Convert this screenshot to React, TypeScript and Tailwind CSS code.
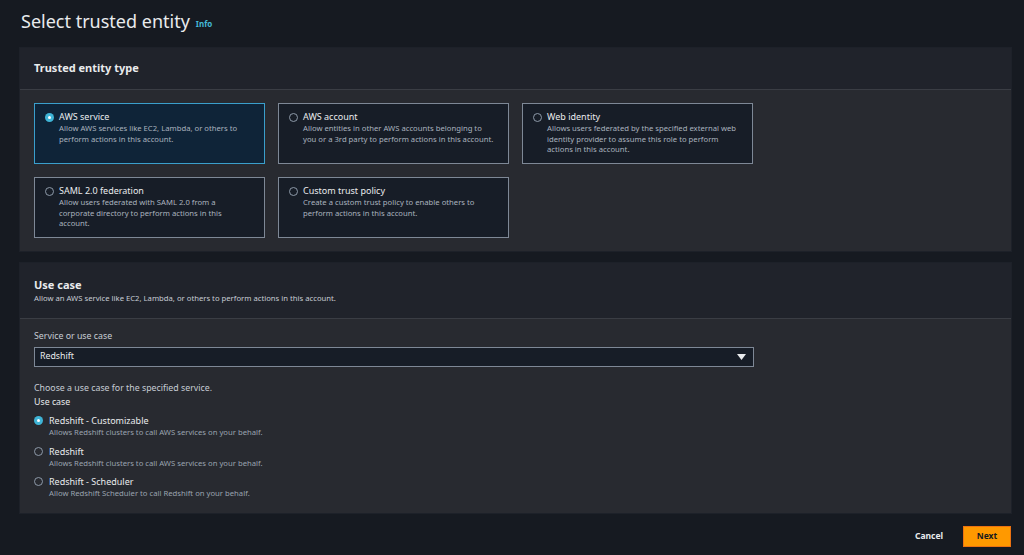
import { useState } from 'react'

type Tile = { id: string; title: string; desc: string }

const tiles: Tile[] = [
  { id: 'aws', title: 'AWS service', desc: 'Allow AWS services like EC2, Lambda, or others to perform actions in this account.' },
  { id: 'account', title: 'AWS account', desc: 'Allow entities in other AWS accounts belonging to you or a 3rd party to perform actions in this account.' },
  { id: 'web', title: 'Web identity', desc: 'Allows users federated by the specified external web identity provider to assume this role to perform actions in this account.' },
  { id: 'saml', title: 'SAML 2.0 federation', desc: 'Allow users federated with SAML 2.0 from a corporate directory to perform actions in this account.' },
  { id: 'custom', title: 'Custom trust policy', desc: 'Create a custom trust policy to enable others to perform actions in this account.' },
]

const useCases = [
  { id: 'custom', title: 'Redshift - Customizable', desc: 'Allows Redshift clusters to call AWS services on your behalf.' },
  { id: 'plain', title: 'Redshift', desc: 'Allows Redshift clusters to call AWS services on your behalf.' },
  { id: 'sched', title: 'Redshift - Scheduler', desc: 'Allow Redshift Scheduler to call Redshift on your behalf.' },
]

function Radio({ on }: { on: boolean }) {
  return on ? (
    <span className="mt-[2px] flex h-[9px] w-[9px] shrink-0 items-center justify-center rounded-full bg-[#3fb4d6]">
      <span className="h-[3px] w-[3px] rounded-full bg-white" />
    </span>
  ) : (
    <span className="mt-[2px] h-[9px] w-[9px] shrink-0 rounded-full border border-[#8d99a8]" />
  )
}

export default function App() {
  const [entity, setEntity] = useState('aws')
  const [useCase, setUseCase] = useState('custom')

  return (
    <div className="min-h-[555px] bg-[#161a21] pl-[20px] pr-[13px] text-[#d1d5db]" style={{ fontFamily: '"Noto Sans", "Open Sans", sans-serif' }}>
      <div className="flex items-end gap-[6px] pt-[8px] pl-[1px]">
        <h1 className="text-[18px] leading-[26px] text-[#e9ebed]">Select trusted entity</h1>
        <span className="mb-[4px] text-[8px] font-bold text-[#44b9d6]">Info</span>
      </div>

      <section className="mt-[14px] bg-[#282a30] shadow-[0_0_0_1px_#1d2129]">
        <div className="flex h-[42px] items-center border-b border-[#3a3d44] bg-[#20232b] px-[14px]">
          <h2 className="text-[11px] font-bold text-[#e9ebed]">Trusted entity type</h2>
        </div>
        <div className="grid grid-cols-[231px_231px_231px] gap-x-[13px] gap-y-[13px] px-[14px] pt-[13px] pb-[13px]">
          {tiles.map((t) => {
            const on = entity === t.id
            return (
              <button
                key={t.id}
                onClick={() => setEntity(t.id)}
                className={`flex h-[61px] gap-[5px] border pl-[10px] pr-[14px] pt-[7px] text-left ${
                  on ? 'border-[#3a9fcc] bg-[#0f2438]' : 'border-[#7e8896] bg-[#171d27]'
                }`}
              >
                <Radio on={on} />
                <div>
                  <div className="text-[9px] leading-[12px] text-[#e9ebed]">{t.title}</div>
                  <div className="text-[7.7px] leading-[10.5px] text-[#aab3bf]">{t.desc}</div>
                </div>
              </button>
            )
          })}
        </div>
      </section>

      <section className="mt-[12px] bg-[#282a30] shadow-[0_0_0_1px_#1d2129]">
        <div className="flex h-[56px] flex-col justify-center border-b border-[#3a3d44] bg-[#20232b] px-[14px]">
          <h2 className="text-[11px] font-bold leading-[14px] text-[#e9ebed]">Use case</h2>
          <p className="text-[7.7px] leading-[12px] text-[#c6ccd4]">Allow an AWS service like EC2, Lambda, or others to perform actions in this account.</p>
        </div>
        <div className="px-[14px] pt-[11px] pb-[14px]">
          <div className="text-[8.8px] leading-[13px] text-[#c6ccd4]">Service or use case</div>
          <div className="mt-[4px] flex h-[20px] w-[720px] items-center justify-between border border-[#7e8896] bg-[#171d27] pl-[5px] pr-[7px]">
            <span className="text-[8.8px] text-[#e9ebed]">Redshift</span>
            <svg width="9" height="6" viewBox="0 0 9 6">
              <path d="M0 0h9L4.5 6z" fill="#e9ebed" />
            </svg>
          </div>
          <div className="mt-[14px] text-[8.8px] leading-[14px] text-[#c6ccd4]">Choose a use case for the specified service.</div>
          <div className="text-[8.8px] leading-[14px] text-[#e9ebed]">Use case</div>
          <div className="mt-[5px] flex flex-col gap-[6.5px]">
            {useCases.map((u) => (
              <button key={u.id} onClick={() => setUseCase(u.id)} className="flex gap-[6px] text-left">
                <Radio on={useCase === u.id} />
                <div>
                  <div className="text-[9px] leading-[13px] text-[#e9ebed]">{u.title}</div>
                  <div className="text-[7.7px] leading-[11px] text-[#9aa3af]">{u.desc}</div>
                </div>
              </button>
            ))}
          </div>
        </div>
      </section>

      <div className="flex items-center justify-end gap-[20px] pt-[13px]">
        <button className="text-[8.5px] font-bold text-[#e9ebed]">Cancel</button>
        <button className="h-[21px] w-[48px] border border-[#ec7211] bg-[#ff9900] text-[8.5px] font-bold text-[#16191f]">Next</button>
      </div>
    </div>
  )
}
